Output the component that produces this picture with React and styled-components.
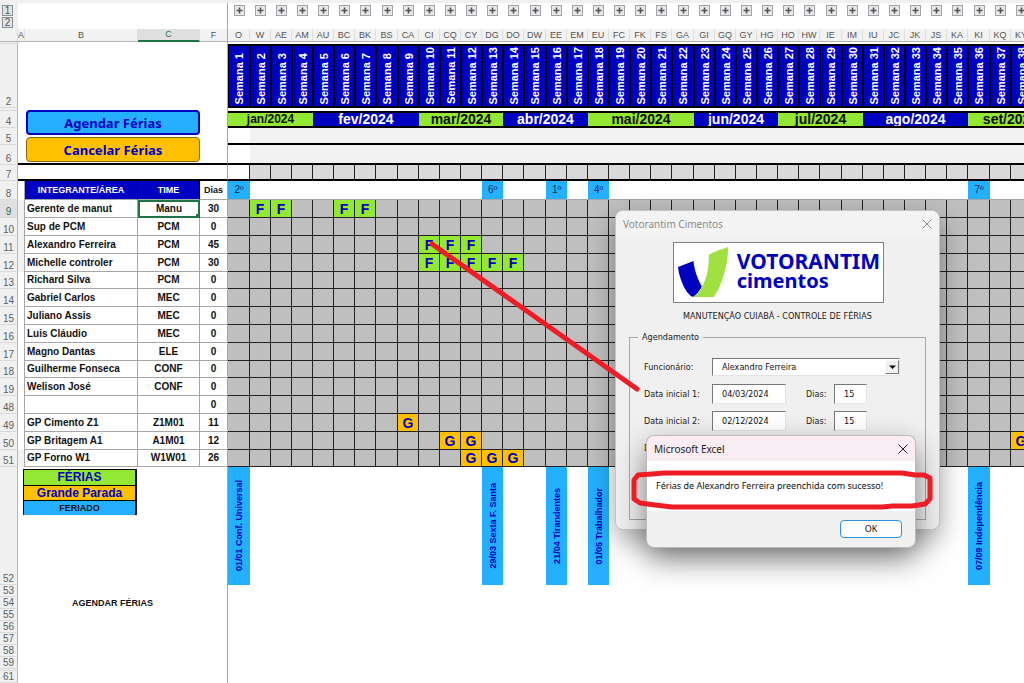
import React from "react";
import styled, { createGlobalStyle, css } from "styled-components";

const NAVY = "#0000c0";
const GREEN = "#92e832";
const BLUE = "#24b0ff";
const AMBER = "#ffc000";

const sans = '"Liberation Sans", Arial, sans-serif';
const ui = '"Noto Sans", "Open Sans", sans-serif';
const form = '"DejaVu Sans Condensed", "DejaVu Sans", sans-serif';

const GlobalStyle = createGlobalStyle`
  *, *::before, *::after { box-sizing: border-box; }
  html, body { margin: 0; height: 100%; background: #fff; }
  #root { height: 100%; }
`;

const Workbook = styled.main`
  position: relative;
  height: 100vh;
  overflow: hidden;
  font-family: ${sans};
  background: #fff;
  color: #111;
`;

const RibbonEdge = styled.div`
  height: 3px;
  background: #f0f0f0;
`;

const Sheet = styled.table`
  table-layout: fixed;
  width: 1053px;
  border-collapse: separate;
  border-spacing: 0;

  td, th {
    padding: 0;
    white-space: nowrap;
    overflow: hidden;
  }
`;

const Col = styled.col`
  width: ${(p) => p.$w}px;
`;

const Row = styled.tr`
  height: ${(p) => p.$h}px;
`;

const Blank = styled.td`
  ${(p) => p.$frozen && css`border-right: 1px solid #a6a6a6;`}
  ${(p) => p.$ruled && css`border-bottom: 2px solid #000;`}
`;

const LevelCell = styled.td`
  vertical-align: top;
  background: #f0f0f0;
`;

const LevelStack = styled.div`
  display: flex;
  flex-direction: column;
  gap: 1px;
  padding: 2px 0 0 2px;
`;

const LevelButton = styled.button`
  width: 11px;
  height: 11px;
  padding: 0;
  border: 1px solid #8a8f96;
  background: #e4e4e4;
  color: #555;
  font: 10px/9px ${sans};
`;

const ExpandCell = styled.td`
  text-align: center;
  vertical-align: top;
`;

const ExpandButton = styled.button`
  display: block;
  width: 11px;
  height: 11px;
  margin: 2px auto 0;
  padding: 0;
  border: 1px solid #a0a4aa;
  background: #e8e8e8;
  svg { display: block; }
`;

const ColumnHead = styled.th`
  background: ${(p) => (p.$active ? "#e0e0e0" : "#f2f2f2")};
  color: ${(p) => (p.$active ? "#217346" : "#555")};
  border-right: 1px solid ${(p) => (p.$frozen ? "#a6a6a6" : "#dedede")};
  border-bottom: ${(p) => (p.$active ? "2px solid #217346" : "1px solid #b4b4b4")};
  font: 9px/11px ${sans};
`;

const RowHead = styled.th`
  background: ${(p) => (p.$active ? "#e0e0e0" : "#f0f0f0")};
  color: ${(p) => (p.$active ? "#217346" : "#606060")};
  border-right: 1px solid #b8b8b8;
  border-bottom: 1px solid #dadada;
  vertical-align: bottom;
  font: 10px/11px ${sans};
`;

const WeekHead = styled.th`
  background: ${NAVY};
  color: #fff;
  border: solid #000;
  border-width: 2px 1px 2px 1px;
  vertical-align: bottom;
`;

const Upright = styled.span`
  display: block;
  width: 18px;
  margin: 0 auto;
  padding-top: 2px;
  writing-mode: vertical-rl;
  transform: rotate(180deg);
  font: bold 11px/18px ${sans};
`;

const MonthHead = styled.th`
  background: ${(p) => (p.$alt ? NAVY : GREEN)};
  color: ${(p) => (p.$alt ? "#fff" : "#111")};
  border: solid #000;
  border-width: 2px 0;
  font: bold ${(p) => (p.$small ? 12 : 14)}px/13px ${sans};
`;

const ActionsCell = styled.td`
  border-right: 1px solid #a6a6a6;
  border-bottom: 2px solid #000;
  vertical-align: top;
`;

const Actions = styled.div`
  display: flex;
  flex-direction: column;
  gap: 2px;
  padding: 2px 27px 0 8px;
`;

const ActionButton = styled.button`
  height: 25px;
  padding: 0;
  border-radius: 4px;
  border: ${(p) => (p.$primary ? `2px solid ${NAVY}` : "1px solid #8a6a10")};
  background: ${(p) => (p.$primary ? BLUE : AMBER)};
  color: ${NAVY};
  font: bold 13px/20px ${ui};
`;

const StripCell = styled.td`
  border-bottom: 2px solid #000;
  background: ${(p) => (p.$first ? "#fff" : p.$boxed ? "#d9d9d9" : "#f2f2f2")};
  ${(p) => p.$boxed && css`border-right: 1px solid #222;`}
`;

const TitleHead = styled.th`
  background: ${(p) => (p.$plain ? "#fff" : NAVY)};
  color: ${(p) => (p.$plain ? "#111" : "#fff")};
  border-right: 1px solid ${(p) => (p.$plain ? "#a6a6a6" : "#000")};
  border-bottom: 1px solid #a6a6a6;
  font: bold 9px/18px ${sans};
`;

const HolidayMark = styled.td`
  background: ${(p) => (p.$on ? BLUE : "#fff")};
  border-bottom: 1px solid #a6a6a6;
  color: #102a50;
  text-align: center;
  font: 10px/18px ${sans};
`;

const Margin = styled.td`
  background: ${(p) => (p.$shade ? "#f2f2f2" : "#fff")};
  border-right: 1px solid #a6a6a6;
`;

const DataCell = styled.td`
  border-right: 1px solid #a6a6a6;
  border-bottom: 1px solid #a6a6a6;
  text-align: ${(p) => (p.$left ? "left" : "center")};
  font: bold 10px/16px ${sans};
  && { padding-left: ${(p) => (p.$left ? 2 : 0)}px; }
  ${(p) => p.$selected && css`
    border: 0;
    box-shadow: inset 0 0 0 2px #217346;
    background: linear-gradient(#217346, #217346) right bottom / 4px 4px no-repeat;
  `}
`;

const fills = { F: GREEN, G: AMBER };

const DayCell = styled.td`
  background: ${(p) => fills[p.$kind] || "#bfbfbf"};
  border-right: 1px solid #222;
  border-bottom: 1px solid #222;
  color: ${NAVY};
  text-align: center;
  font: bold 14px/16px ${sans};
`;

const KeyCell = styled.td`
  border-right: 1px solid #a6a6a6;
  vertical-align: top;
`;

const KeyList = styled.ul`
  list-style: none;
  width: 114px;
  margin: 2px 0 0 5px;
  padding: 0;
  border: solid #000;
  border-width: 1px 2px 0 1px;
`;

const KeyItem = styled.li`
  height: 15px;
  background: ${(p) => p.$bg};
  color: ${(p) => (p.$small ? "#111" : NAVY)};
  text-align: center;
  font: bold ${(p) => (p.$small ? 9 : 12)}px/15px ${sans};
  & + & { border-top: 1px solid #000; }
`;

const HolidayCell = styled.td`
  background: ${(p) => (p.$on ? BLUE : "transparent")};
`;

const HolidayName = styled.span`
  display: block;
  width: 14px;
  margin: 0 auto;
  writing-mode: vertical-rl;
  transform: rotate(180deg);
  color: ${NAVY};
  font: bold 9px/14px ${sans};
`;

const NoteCell = styled.td`
  text-align: center;
  font: bold 9px/11px ${sans};
`;

/* Floating windows */

const FormWindow = styled.section`
  position: absolute;
  left: 615px;
  top: 210px;
  width: 325px;
  height: 320px;
  border: 1px solid #c4c4c4;
  border-radius: 8px;
  background: #f0f0f0;
  box-shadow: 0 10px 28px rgba(0, 0, 0, 0.35);
  font: 9px/14px ${form};
  color: #222;
`;

const WindowBar = styled.header`
  display: flex;
  align-items: center;
  justify-content: space-between;
  height: 25px;
  padding: 0 7px;
  border-radius: 8px 8px 0 0;
  background: ${(p) => (p.$alert ? "#f9edf3" : "#f3f3f3")};
  color: ${(p) => (p.$alert ? "#222" : "#8c8c8c")};
  h2 { margin: 0; font: 10px/14px ${ui}; }
`;

const CloseButton = styled.button`
  display: grid;
  place-items: center;
  width: 10px;
  height: 10px;
  padding: 0;
  border: 0;
  background: none;
  color: inherit;
`;

const LogoFrame = styled.div`
  display: flex;
  align-items: center;
  gap: 6px;
  width: 211px;
  height: 61px;
  margin: 6px auto 0 57px;
  padding: 0 3px 0 4px;
  border: 1px solid #808080;
  background: #fff;
`;

const LogoName = styled.div`
  padding-bottom: 4px;
  color: ${NAVY};
  font: bold 21px/19px ${ui};
  span { display: block; font-size: 20px; }
`;

const FormCaption = styled.p`
  margin: 6px 0 0;
  text-align: center;
`;

const Group = styled.fieldset`
  height: 190px;
  margin: 7px 13px 0;
  padding: 13px 14px 0;
  border: 1px solid #a8a8a8;
  legend { margin-left: -6px; padding: 0 4px; line-height: 14px; }
`;

const FieldRow = styled.div`
  display: grid;
  grid-template-columns: 68px 94px 28px 33px;
  align-items: center;
  height: 20px;
  margin-bottom: 7px;
`;

const sunken = css`
  border: 1px solid;
  border-color: #777 #e4e4e4 #e4e4e4 #777;
  border-radius: 0;
  background: #fff;
  color: #111;
  font: 9px/14px ${form};
`;

const TextBox = styled.input`
  ${sunken}
  width: ${(p) => p.$w}px;
  height: 20px;
  padding: 0 0 0 9px;
`;

const SelectWrap = styled.span`
  position: relative;
  grid-column: 2 / 5;
  width: 188px;
  height: 18px;
`;

const Select = styled.select`
  ${sunken}
  display: block;
  width: 100%;
  height: 18px;
  padding: 0 16px 0 9px;
  appearance: none;
`;

const SelectArrow = styled.span`
  position: absolute;
  right: 1px;
  top: 2px;
  width: 14px;
  height: 14px;
  background: #f0f0f0;
  border: 1px solid;
  border-color: #fff #777 #777 #fff;
  pointer-events: none;
  svg { display: block; }
`;

const AlertWindow = styled.section`
  position: absolute;
  left: 647px;
  top: 436px;
  width: 268px;
  border-radius: 7px;
  background: #f0f0f0;
  box-shadow: 0 0 0 1px #bbb, 0 12px 30px rgba(0, 0, 0, 0.5);
  color: #111;
`;

const AlertText = styled.p`
  height: 50px;
  margin: 0;
  padding: 18px 9px;
  background: #fff;
  white-space: nowrap;
  font: 9px/14px ${ui};
`;

const AlertFooter = styled.footer`
  display: flex;
  justify-content: flex-end;
  padding: 9px 13px;
`;

const OkButton = styled.button`
  width: 62px;
  height: 18px;
  padding: 0;
  border: 1px solid #2f8fd8;
  border-radius: 4px;
  background: #fdfdfd;
  color: #111;
  font: 9px/14px ${ui};
`;

const Markup = styled.svg`
  position: absolute;
  left: 0;
  top: 0;
  pointer-events: none;
`;

const letters = "O W AE AM AU BC BK BS CA CI CQ CY DG DO DW EE EM EU FC FK FS GA GI GQ GY HG HO HW IE IM IU JC JK JS KA KI KQ KY LG".split(" ");

const months = [
  ["jan/2024", 4], ["fev/2024", 5], ["mar/2024", 4], ["abr/2024", 4], ["mai/2024", 5],
  ["jun/2024", 4], ["jul/2024", 4], ["ago/2024", 5], ["set/2024", 4],
];

const holidays = {
  0: ["2º", "01/01 Conf. Universal"],
  12: ["6º", "29/03 Sexta F. Santa"],
  15: ["1º", "21/04 Tirandentes"],
  17: ["4º", "01/05 Trabalhador"],
  35: ["7º", "07/09 Independência"],
};

const people = [
  { n: 9, name: "Gerente de manut", team: "Manu", days: 30, kind: "F", weeks: [1, 2, 5, 6] },
  { n: 10, name: "Sup de PCM", team: "PCM", days: 0 },
  { n: 11, name: "Alexandro Ferreira", team: "PCM", days: 45, kind: "F", weeks: [9, 10, 11] },
  { n: 12, name: "Michelle controler", team: "PCM", days: 30, kind: "F", weeks: [9, 10, 11, 12, 13] },
  { n: 13, name: "Richard Silva", team: "PCM", days: 0 },
  { n: 14, name: "Gabriel Carlos", team: "MEC", days: 0 },
  { n: 15, name: "Juliano Assis", team: "MEC", days: 0 },
  { n: 16, name: "Luis Cláudio", team: "MEC", days: 0 },
  { n: 17, name: "Magno Dantas", team: "ELE", days: 0 },
  { n: 18, name: "Guilherme Fonseca", team: "CONF", days: 0 },
  { n: 19, name: "Welison José", team: "CONF", days: 0 },
  { n: 48, name: "", team: "", days: 0 },
  { n: 49, name: "GP Cimento Z1", team: "Z1M01", days: 11, kind: "G", weeks: [8] },
  { n: 50, name: "GP Britagem A1", team: "A1M01", days: 12, kind: "G", weeks: [10, 11, 37] },
  { n: 51, name: "GP Forno W1", team: "W1W01", days: 26, kind: "G", weeks: [11, 12, 13] },
];

const tail = [[53, 12], [54, 12], [55, 12], [56, 12], [57, 12], [58, 12], [59, 12], ["", 2], [61, 12], ["", 12]];

const Cross = () => (
  <svg width="10" height="10" viewBox="0 0 10 10" fill="none" stroke="currentColor" strokeWidth="1">
    <path d="M0.5 0.5 9.5 9.5M9.5 0.5 0.5 9.5" />
  </svg>
);

function CalendarSheet() {
  return (
    <Sheet>
      <colgroup>
        <Col $w={18} /><Col $w={7} /><Col $w={113} /><Col $w={62} /><Col $w={28} />
        {letters.map((l, i) => <Col key={l} $w={i % 7 === 0 ? 22 : 21} />)}
      </colgroup>
      <thead>
        <Row $h={26}>
          <LevelCell>
            <LevelStack><LevelButton>1</LevelButton><LevelButton>2</LevelButton></LevelStack>
          </LevelCell>
          <Blank colSpan={4} $frozen />
          {letters.map((l) => (
            <ExpandCell key={l}>
              <ExpandButton aria-label={`Expandir ${l}`}>
                <svg width="9" height="9" viewBox="0 0 9 9" stroke="#555" strokeWidth="1.6"><path d="M1.5 4.5H7.5M4.5 1.5V7.5" /></svg>
              </ExpandButton>
            </ExpandCell>
          ))}
        </Row>
        <Row $h={13}>
          <ColumnHead />
          <ColumnHead>A</ColumnHead>
          <ColumnHead>B</ColumnHead>
          <ColumnHead $active>C</ColumnHead>
          <ColumnHead $frozen>F</ColumnHead>
          {letters.map((l) => <ColumnHead key={l}>{l}</ColumnHead>)}
        </Row>
      </thead>
      <tbody>
        <Row $h={2}><RowHead /><Blank colSpan={4} $frozen /><Blank colSpan={39} /></Row>
        <Row $h={64}>
          <RowHead>2</RowHead>
          <Blank colSpan={4} $frozen />
          {letters.map((l, i) => <WeekHead key={l}><Upright>Semana {i + 1}</Upright></WeekHead>)}
        </Row>
        <Row $h={3}>
          <RowHead />
          <ActionsCell colSpan={4} rowSpan={4}>
            <Actions>
              <ActionButton $primary>Agendar Férias</ActionButton>
              <ActionButton>Cancelar Férias</ActionButton>
            </Actions>
          </ActionsCell>
          <Blank colSpan={39} />
        </Row>
        <Row $h={17}>
          <RowHead>4</RowHead>
          {months.map(([m, span], i) => (
            <MonthHead key={m} colSpan={span} $alt={i % 2 === 1} $small={i === 0}>{m}</MonthHead>
          ))}
        </Row>
        <Row $h={17}>
          <RowHead>5</RowHead>
          <StripCell $first />
          <StripCell colSpan={38} />
        </Row>
        <Row $h={20}>
          <RowHead>6</RowHead>
          <StripCell $first />
          <StripCell colSpan={38} />
        </Row>
        <Row $h={16}>
          <RowHead>7</RowHead>
          <Blank colSpan={4} $frozen $ruled />
          {letters.map((l, i) => <StripCell key={l} $boxed $first={i === 0} />)}
        </Row>
        <Row $h={19}>
          <RowHead>8</RowHead>
          <Margin />
          <TitleHead>INTEGRANTE/ÁREA</TitleHead>
          <TitleHead>TIME</TitleHead>
          <TitleHead $plain>Dias</TitleHead>
          {letters.map((l, i) => (
            <HolidayMark key={l} $on={!!holidays[i]}>{holidays[i] && holidays[i][0]}</HolidayMark>
          ))}
        </Row>
        {people.map((p, r) => (
          <Row key={p.n} $h={r % 5 === 4 ? 17 : 18}>
            <RowHead $active={p.n === 9}>{p.n}</RowHead>
            <Margin $shade={r < 4 || p.n === 51} />
            <DataCell $left>{p.name}</DataCell>
            <DataCell $selected={p.n === 9}>{p.team}</DataCell>
            <DataCell>{p.days}</DataCell>
            {letters.map((l, i) => {
              const kind = p.weeks && p.weeks.includes(i) ? p.kind : null;
              return <DayCell key={l} $kind={kind}>{kind}</DayCell>;
            })}
          </Row>
        ))}
        <Row $h={118}>
          <RowHead>52</RowHead>
          <KeyCell colSpan={4}>
            <KeyList>
              <KeyItem $bg={GREEN}>FÉRIAS</KeyItem>
              <KeyItem $bg={AMBER}>Grande Parada</KeyItem>
              <KeyItem $bg={BLUE} $small>FERIADO</KeyItem>
            </KeyList>
          </KeyCell>
          {letters.map((l, i) => (
            <HolidayCell key={l} $on={!!holidays[i]}>
              {holidays[i] && <HolidayName>{holidays[i][1]}</HolidayName>}
            </HolidayCell>
          ))}
        </Row>
        {tail.map(([n, h], i) => (
          <Row key={i} $h={h}>
            <RowHead>{n}</RowHead>
            <Blank />
            <NoteCell colSpan={2}>{n === 54 && "AGENDAR FÉRIAS"}</NoteCell>
            <Blank $frozen />
            <Blank colSpan={39} />
          </Row>
        ))}
      </tbody>
    </Sheet>
  );
}

function DateRow({ n, date, days }) {
  return (
    <FieldRow>
      <label htmlFor={`data${n}`}>Data inicial {n}:</label>
      <TextBox id={`data${n}`} $w={74} defaultValue={date} />
      <label htmlFor={`dias${n}`}>Dias:</label>
      <TextBox id={`dias${n}`} $w={33} defaultValue={days} />
    </FieldRow>
  );
}

function ScheduleForm() {
  return (
    <FormWindow>
      <WindowBar>
        <h2>Votorantim Cimentos</h2>
        <CloseButton aria-label="Fechar"><Cross /></CloseButton>
      </WindowBar>
      <LogoFrame>
        <svg width="53" height="51" viewBox="0 0 53 51">
          <path d="M0 20 15.500 14Q17 28 24 39.500Q20 47 15 50Q10 48 6 40Q1 30 0 20Z" fill={NAVY} />
          <path d="M31 7.500Q40 3 50.500 0Q50 14 46.500 26Q42 42 36 50H15Q21 47 24.500 39Q31 28 31 7.500Z" fill="#a0e040" />
        </svg>
        <LogoName>VOTORANTIM<span>cimentos</span></LogoName>
      </LogoFrame>
      <FormCaption>MANUTENÇÃO CUIABÁ - CONTROLE DE FÉRIAS</FormCaption>
      <Group>
        <legend>Agendamento</legend>
        <FieldRow>
          <label htmlFor="func">Funcionário:</label>
          <SelectWrap>
            <Select id="func" defaultValue="Alexandro Ferreira"><option>Alexandro Ferreira</option></Select>
            <SelectArrow><svg width="12" height="12" viewBox="0 0 12 12"><path d="M3 4.5H10L6.5 8Z" fill="#000" /></svg></SelectArrow>
          </SelectWrap>
        </FieldRow>
        <DateRow n={1} date="04/03/2024" days="15" />
        <DateRow n={2} date="02/12/2024" days="15" />
        <FieldRow><span>Data inicial 3:</span></FieldRow>
      </Group>
    </FormWindow>
  );
}

function SuccessAlert() {
  return (
    <AlertWindow role="alertdialog" aria-label="Microsoft Excel">
      <WindowBar $alert>
        <h2>Microsoft Excel</h2>
        <CloseButton aria-label="Fechar"><Cross /></CloseButton>
      </WindowBar>
      <AlertText>Férias de Alexandro Ferreira preenchida com sucesso!</AlertText>
      <AlertFooter><OkButton>OK</OkButton></AlertFooter>
    </AlertWindow>
  );
}

export default function App() {
  return (
    <Workbook>
      <GlobalStyle />
      <RibbonEdge />
      <CalendarSheet />
      <ScheduleForm />
      <SuccessAlert />
      <Markup width="960" height="540" viewBox="0 0 960 540" fill="none" stroke="#ee1c25" strokeLinecap="round" strokeLinejoin="round">
        <path d="M432 244 637 389" strokeWidth="5" />
        <path d="M664 473 H902 L915 475 H924 L930 478 V499 L925 504 L912 506 H893 L882 507 H672 L655 505 L640 503 L634 499 V480 L638 475 L652 474Z" strokeWidth="5" />
      </Markup>
    </Workbook>
  );
}
